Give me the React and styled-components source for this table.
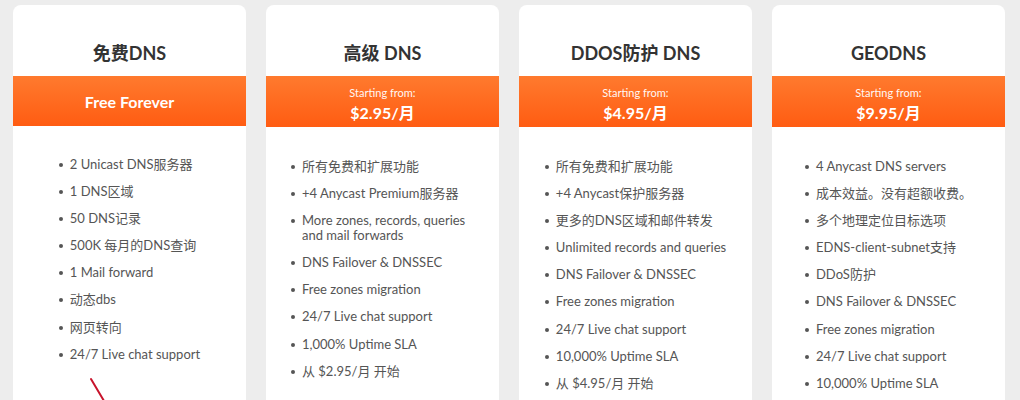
import React from "react";
import styled, { createGlobalStyle } from "styled-components";

const Global = createGlobalStyle`
  html, body { margin: 0; padding: 0; background: #ededed; }
  body { font-family: "Lato", "Noto Sans CJK SC", sans-serif; overflow: hidden; }
`;

const Page = styled.div`
  display: grid;
  grid-template-columns: repeat(4, 233px);
  column-gap: 20px;
  padding: 5px 15px 0 13px;
  height: 400px;
  box-sizing: border-box;
`;

const Card = styled.div`
  position: relative;
  background: #ffffff;
  border-radius: 8px 8px 0 0;
  min-height: 460px;
  display: flex;
  flex-direction: column;
`;

const Header = styled.div`
  height: 71px;
  box-sizing: border-box;
  padding-top: 36px;
  text-align: center;
`;

const Title = styled.h2`
  margin: 0;
  font-family: "Lato", "Noto Sans CJK SC", sans-serif;
  font-size: 18px;
  line-height: 24px;
  font-weight: 700;
  color: #333333;
`;

const Band = styled.div`
  height: ${(p) => (p.$tall ? 51 : 50)}px;
  background: linear-gradient(180deg, #ff7a2e 0%, #ff5c12 100%);
  color: #ffffff;
  display: flex;
  flex-direction: column;
  align-items: center;
  justify-content: center;
  text-align: center;
`;

const Forever = styled.div`
  font-size: 16px;
  font-weight: 700;
  line-height: 20px;
  margin-top: 2px;
`;

const Starting = styled.div`
  font-size: 11px;
  line-height: 14px;
  margin-top: 6px;
  opacity: 0.95;
`;

const Price = styled.div`
  font-size: 16px;
  font-weight: 700;
  line-height: 22px;
  margin-top: 2px;
`;

const List = styled.ul`
  list-style: none;
  margin: ${(p) => (p.$priced ? 32 : 31)}px auto 0;
  padding: 0;
  width: fit-content;
  max-width: calc(100% - 50px);
  display: flex;
  flex-direction: column;
  gap: 12.1px;
`;

const Item = styled.li`
  position: relative;
  padding-left: 11px;
  font-size: 13px;
  line-height: 15px;
  color: #555555;
  &::before {
    content: "";
    position: absolute;
    left: 0;
    top: 6px;
    width: 4px;
    height: 4px;
    border-radius: 50%;
    background: #555555;
  }
`;

const Annotation = styled.svg`
  position: absolute;
  left: 70px;
  top: 365px;
  width: 40px;
  height: 40px;
  overflow: visible;
`;

const plans = [
  {
    title: "免费DNS",
    forever: "Free Forever",
    items: [
      "2 Unicast DNS服务器",
      "1 DNS区域",
      "50 DNS记录",
      "500K 每月的DNS查询",
      "1 Mail forward",
      "动态dbs",
      "网页转向",
      "24/7 Live chat support",
    ],
    arrow: true,
  },
  {
    title: "高级 DNS",
    price: "$2.95/月",
    items: [
      "所有免费和扩展功能",
      "+4 Anycast Premium服务器",
      "More zones, records, queries and mail forwards",
      "DNS Failover & DNSSEC",
      "Free zones migration",
      "24/7 Live chat support",
      "1,000% Uptime SLA",
      "从 $2.95/月 开始",
    ],
  },
  {
    title: "DDOS防护 DNS",
    price: "$4.95/月",
    items: [
      "所有免费和扩展功能",
      "+4 Anycast保护服务器",
      "更多的DNS区域和邮件转发",
      "Unlimited records and queries",
      "DNS Failover & DNSSEC",
      "Free zones migration",
      "24/7 Live chat support",
      "10,000% Uptime SLA",
      "从 $4.95/月 开始",
    ],
  },
  {
    title: "GEODNS",
    price: "$9.95/月",
    items: [
      "4 Anycast DNS servers",
      "成本效益。没有超额收费。",
      "多个地理定位目标选项",
      "EDNS-client-subnet支持",
      "DDoS防护",
      "DNS Failover & DNSSEC",
      "Free zones migration",
      "24/7 Live chat support",
      "10,000% Uptime SLA",
    ],
  },
];

export default function App() {
  return (
    <>
      <Global />
      <Page>
        {plans.map((p) => (
          <Card key={p.title}>
            <Header>
              <Title>{p.title}</Title>
            </Header>
            <Band $tall={!p.forever}>
              {p.forever ? (
                <Forever>{p.forever}</Forever>
              ) : (
                <>
                  <Starting>Starting from:</Starting>
                  <Price>{p.price}</Price>
                </>
              )}
            </Band>
            <List $priced={!p.forever}>
              {p.items.map((it) => (
                <Item key={it}>{it}</Item>
              ))}
            </List>
            {p.arrow && (
              <Annotation viewBox="0 0 40 40">
                <line x1="8" y1="9" x2="24" y2="36" stroke="#c8142c" strokeWidth="2" strokeLinecap="round" />
              </Annotation>
            )}
          </Card>
        ))}
      </Page>
    </>
  );
}
